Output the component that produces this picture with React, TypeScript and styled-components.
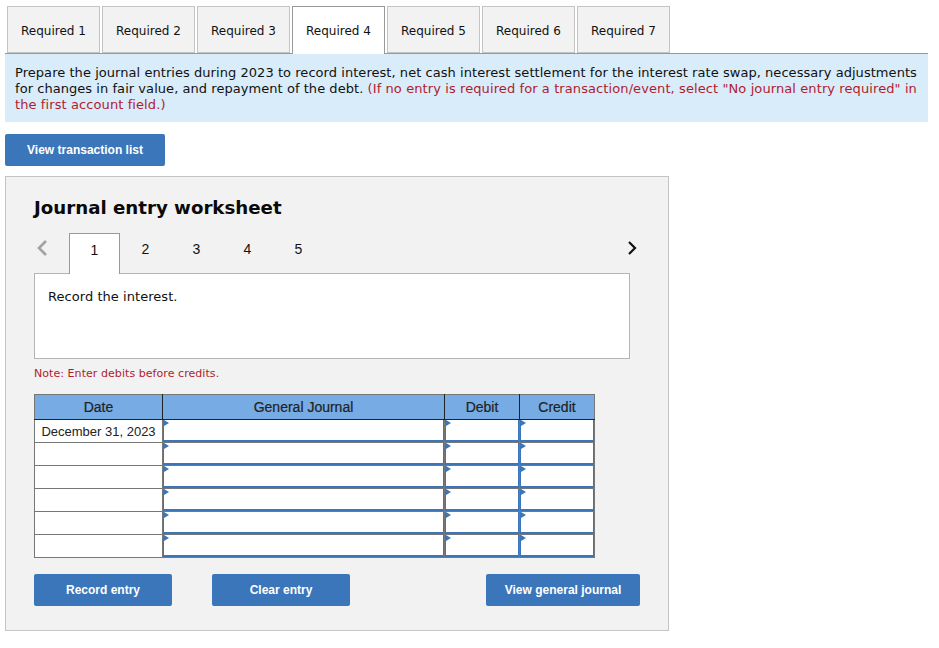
import React from 'react';
import styled, { createGlobalStyle } from 'styled-components';

const GlobalStyle = createGlobalStyle`
  html, body {
    margin: 0;
    padding: 0;
    background: #fff;
  }
  * {
    box-sizing: border-box;
  }
`;

const Page = styled.div`
  width: 939px;
  height: 648px;
  padding: 6px 11px 0 5px;
  font-family: 'DejaVu Sans', Verdana, sans-serif;
  color: #111;
`;

const TabBar = styled.div`
  display: flex;
  gap: 2px;
  height: 48px;
  padding-left: 2px;
  border-bottom: 1px solid #999;
`;

const Tab = styled.div<{ $active?: boolean }>`
  width: 93px;
  height: ${(p) => (p.$active ? '48px' : '47px')};
  display: flex;
  align-items: center;
  justify-content: center;
  padding-top: ${(p) => (p.$active ? '0' : '2px')};
  font-size: 12px;
  background: ${(p) => (p.$active ? '#fff' : '#f2f2f2')};
  border: 1px solid ${(p) => (p.$active ? '#999' : '#c4c4c4')};
  border-bottom: ${(p) => (p.$active ? '0' : '1px solid #c4c4c4')};
  position: relative;
`;

const Prompt = styled.div`
  height: 68px;
  padding: 11px 10px 0 10px;
  background: #d9ecfa;
  font-size: 13px;
  line-height: 16px;
  letter-spacing: 0.05px;
`;

const RedText = styled.span`
  color: #b01c2e;
  letter-spacing: 0.095px;
`;

const BlueButton = styled.button<{ $width: number }>`
  width: ${(p) => p.$width}px;
  height: 32px;
  padding: 0;
  border: 0;
  border-radius: 2px;
  background: #3b76ba;
  color: #fff;
  font-family: 'Liberation Sans', Arial, sans-serif;
  font-size: 12px;
  font-weight: bold;
`;

const ViewListRow = styled.div`
  margin-top: 12px;
  height: 32px;
  display: flex;
`;

const Panel = styled.div`
  width: 664px;
  height: 455px;
  margin-top: 10px;
  padding: 0 28px;
  background: #f2f2f2;
  border: 1px solid #c4c4c4;
`;

const Heading = styled.h2`
  margin: 18px 0 0;
  height: 26px;
  font-size: 18.2px;
  line-height: 26px;
  font-weight: bold;
  color: #0a0a0a;
`;

const StepBar = styled.div`
  display: flex;
  align-items: stretch;
  height: 41px;
  margin-top: 12px;
  width: 605px;
`;

const Chevron = styled.div<{ $side: 'left' | 'right' }>`
  width: ${(p) => (p.$side === 'left' ? '35px' : 'auto')};
  margin-left: ${(p) => (p.$side === 'right' ? 'auto' : '0')};
  padding-top: 6px;
  padding-left: ${(p) => (p.$side === 'left' ? '2px' : '0')};
  line-height: 0;
`;

const Step = styled.div<{ $active?: boolean }>`
  width: 51px;
  height: ${(p) => (p.$active ? '41px' : '40px')};
  display: flex;
  align-items: center;
  justify-content: center;
  padding-bottom: 9px;
  font-family: 'Liberation Sans', Arial, sans-serif;
  font-size: 14px;
  position: relative;
  z-index: 1;
  background: ${(p) => (p.$active ? '#fff' : 'transparent')};
  border: ${(p) => (p.$active ? '1px solid #999' : '0')};
  border-bottom: 0;
`;

const Instruction = styled.div`
  width: 596px;
  height: 86px;
  margin-top: -1px;
  padding: 15px 13px;
  background: #fff;
  border: 1px solid #b4b4b4;
  font-size: 13px;
  line-height: 16px;
  letter-spacing: 0.05px;
`;

const Note = styled.div`
  margin-top: 8px;
  height: 14px;
  font-size: 11px;
  line-height: 14px;
  letter-spacing: 0.06px;
  color: #b01c2e;
`;

const Journal = styled.table`
  width: 561px;
  margin-top: 13px;
  border-collapse: collapse;
  table-layout: fixed;
  font-family: 'Liberation Sans', Arial, sans-serif;
  font-size: 14px;
`;

const HeadCell = styled.th<{ $width: number }>`
  width: ${(p) => p.$width}px;
  height: 25px;
  padding: 0;
  background: #76abe4;
  color: #222;
  font-weight: normal;
  -webkit-text-stroke: 0.2px #222;
  border: 1px solid #222;
  border-top-color: #777;
  &:first-child {
    border-left-color: #777;
  }
  &:last-child {
    border-right-color: #777;
  }
`;

const DateCell = styled.td`
  height: 23px;
  padding: 0;
  background: #fff;
  text-align: center;
  font-size: 13px;
  color: #222;
  border: 1px solid #777;
  border-top-color: #222;
  tr + tr & {
    border-top-color: #777;
  }
`;

const EntryCell = styled.td`
  height: 23px;
  padding: 0;
  background: #fff;
  position: relative;
  border: 1px solid #777;
  border-top-color: #222;
  box-shadow: inset 1px 0 0 #3b76ba, inset 0 -2px 0 #3b76ba, inset -1px 0 0 #3b76ba;
  tr + tr & {
    border-top-color: #777;
  }
  &::before {
    content: '';
    position: absolute;
    left: 1px;
    top: 0;
    border-left: 5px solid #3b76ba;
    border-top: 3.5px solid transparent;
    border-bottom: 3.5px solid transparent;
  }
`;

const Actions = styled.div`
  display: flex;
  width: 606px;
  margin-top: 16px;
  gap: 40px;
`;

const PushRight = styled.div`
  margin-left: auto;
`;

const tabs = [1, 2, 3, 4, 5, 6, 7];
const steps = [1, 2, 3, 4, 5];
const rows = ['December 31, 2023', '', '', '', '', ''];

const App: React.FC = () => {
  return (
    <>
      <GlobalStyle />
      <Page>
        <TabBar>
          {tabs.map((n) => (
            <Tab key={n} $active={n === 4}>
              Required {n}
            </Tab>
          ))}
        </TabBar>
        <Prompt>
          Prepare the journal entries during 2023 to record interest, net cash interest settlement for the interest rate swap, necessary adjustments
          for changes in fair value, and repayment of the debt.{' '}
          <RedText>
            (If no entry is required for a transaction/event, select "No journal entry required" in the first account field.)
          </RedText>
        </Prompt>
        <ViewListRow>
          <BlueButton type='button' $width={160}>
            View transaction list
          </BlueButton>
        </ViewListRow>
        <Panel>
          <Heading>Journal entry worksheet</Heading>
          <StepBar>
            <Chevron $side='left'>
              <svg width='12' height='18' viewBox='0 0 12 18'>
                <path d='M10 2 L3 9 L10 16' fill='none' stroke='#a3a3a3' strokeWidth='2.6' />
              </svg>
            </Chevron>
            {steps.map((n) => (
              <Step key={n} $active={n === 1}>
                {n}
              </Step>
            ))}
            <Chevron $side='right'>
              <svg width='12' height='18' viewBox='0 0 12 18'>
                <path d='M2 3 L8 9 L2 15' fill='none' stroke='#111' strokeWidth='2.2' />
              </svg>
            </Chevron>
          </StepBar>
          <Instruction>Record the interest.</Instruction>
          <Note>Note: Enter debits before credits.</Note>
          <Journal>
            <thead>
              <tr>
                <HeadCell $width={128}>Date</HeadCell>
                <HeadCell $width={282}>General Journal</HeadCell>
                <HeadCell $width={75}>Debit</HeadCell>
                <HeadCell $width={75}>Credit</HeadCell>
              </tr>
            </thead>
            <tbody>
              {rows.map((date, i) => (
                <tr key={i}>
                  <DateCell>{date}</DateCell>
                  <EntryCell />
                  <EntryCell />
                  <EntryCell />
                </tr>
              ))}
            </tbody>
          </Journal>
          <Actions>
            <BlueButton type='button' $width={138}>
              Record entry
            </BlueButton>
            <BlueButton type='button' $width={138}>
              Clear entry
            </BlueButton>
            <PushRight>
              <BlueButton type='button' $width={154}>
                View general journal
              </BlueButton>
            </PushRight>
          </Actions>
        </Panel>
      </Page>
    </>
  );
};

export default App;
